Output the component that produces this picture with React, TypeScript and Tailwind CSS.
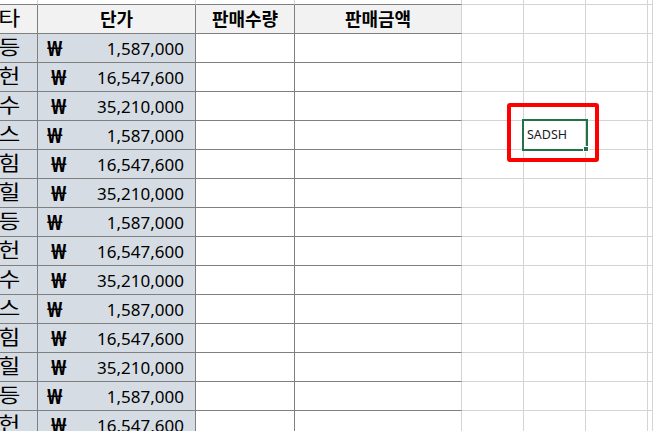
import React from "react";

const names = ["등", "헌", "수", "스", "힘", "힐"];
const prices = [1587000, 16547600, 35210000];

const fmt = (n: number) => n.toLocaleString("en-US");

// table area cells: dark bottom/right borders
const tb = "border-r border-b border-r-[#7f7f7f] border-b-[#7f7f7f]";
// last table column: light right edge, dark bottom
const tbLast = "border-r border-b border-r-[#d4d4d4] border-b-[#7f7f7f]";
// plain sheet gridline
const grid = "border-r border-b border-r-[#d4d4d4] border-b-[#d4d4d4]";

const cols = "grid grid-cols-[38px_158px_99px_167px_62px_62px_62px_1fr]";

export default function App() {
  const rows = Array.from({ length: 14 }, (_, i) => ({
    name: names[i % 6],
    price: prices[i % 3],
  }));

  return (
    <div className="relative w-[653px] h-[431px] overflow-hidden bg-white text-black font-['Noto_Sans','Noto_Sans_CJK_KR',sans-serif]">
      {/* sliver of the row above */}
      <div className={`${cols} h-[5px]`}>
        <div className="border-r border-b border-r-[#d4d4d4] border-b-[#7f7f7f]" />
        <div className="border-r border-b border-r-[#d4d4d4] border-b-[#7f7f7f]" />
        <div className="border-r border-b border-r-[#d4d4d4] border-b-[#7f7f7f]" />
        <div className="border-r border-b border-r-[#d4d4d4] border-b-[#7f7f7f]" />
        <div className={grid} />
        <div className={grid} />
        <div className={grid} />
        <div className={grid} />
      </div>

      {/* header */}
      <div className={`${cols} h-[29px] text-[18px] font-bold leading-none`}>
        <div className={`${tb} bg-[#f2f2f2] flex items-center justify-end pr-[17px] overflow-hidden whitespace-nowrap`}>
          <span className="inline-block origin-right scale-x-[1.2] font-normal text-[20px]">타</span>
        </div>
        <div className={`${tb} bg-[#f2f2f2] flex items-center justify-center`}>단가</div>
        <div className={`${tb} bg-[#f2f2f2] flex items-center justify-center`}>판매수량</div>
        <div className={`${tbLast} bg-[#f2f2f2] flex items-center justify-center`}>판매금액</div>
        <div className={grid} />
        <div className={grid} />
        <div className={grid} />
        <div className={grid} />
      </div>

      {rows.map((r, i) => (
        <div key={i} className={`${cols} h-[29px] text-[17px] leading-none`}>
          <div className={`${tb} bg-[#d6dce4] flex items-center justify-end pr-[17px] overflow-hidden whitespace-nowrap`}>
            <span className="inline-block origin-right scale-x-[1.2] text-[20px]">{r.name}</span>
          </div>
          <div
            className={`${tb} bg-[#d6dce4] flex items-center justify-between pr-[11px] ${
              r.price === 1587000 ? "pl-[9px]" : "pl-[13px]"
            }`}
          >
            <span className="font-bold text-[21px]">₩</span>
            <span>{fmt(r.price)}</span>
          </div>
          <div className={tb} />
          <div className={tbLast} />
          <div className={grid} />
          <div className={`${grid} flex items-center pl-[3px] text-[12.5px] text-[#1b1b1b]`}>
            {i === 3 ? "SADSH" : ""}
          </div>
          <div className={grid} />
          <div className={grid} />
        </div>
      ))}

      {/* active cell selection */}
      <div className="absolute left-[522px] top-[119px] w-[66px] h-[32px] border-2 border-[#217346]" />
      <div className="absolute left-[583px] top-[146px] w-[6px] h-[6px] bg-[#217346] border border-white" />

      {/* red highlight box */}
      <div className="absolute left-[507px] top-[103px] w-[92px] h-[59px] border-4 border-[#ff0000] rounded-[3px]" />
    </div>
  );
}
